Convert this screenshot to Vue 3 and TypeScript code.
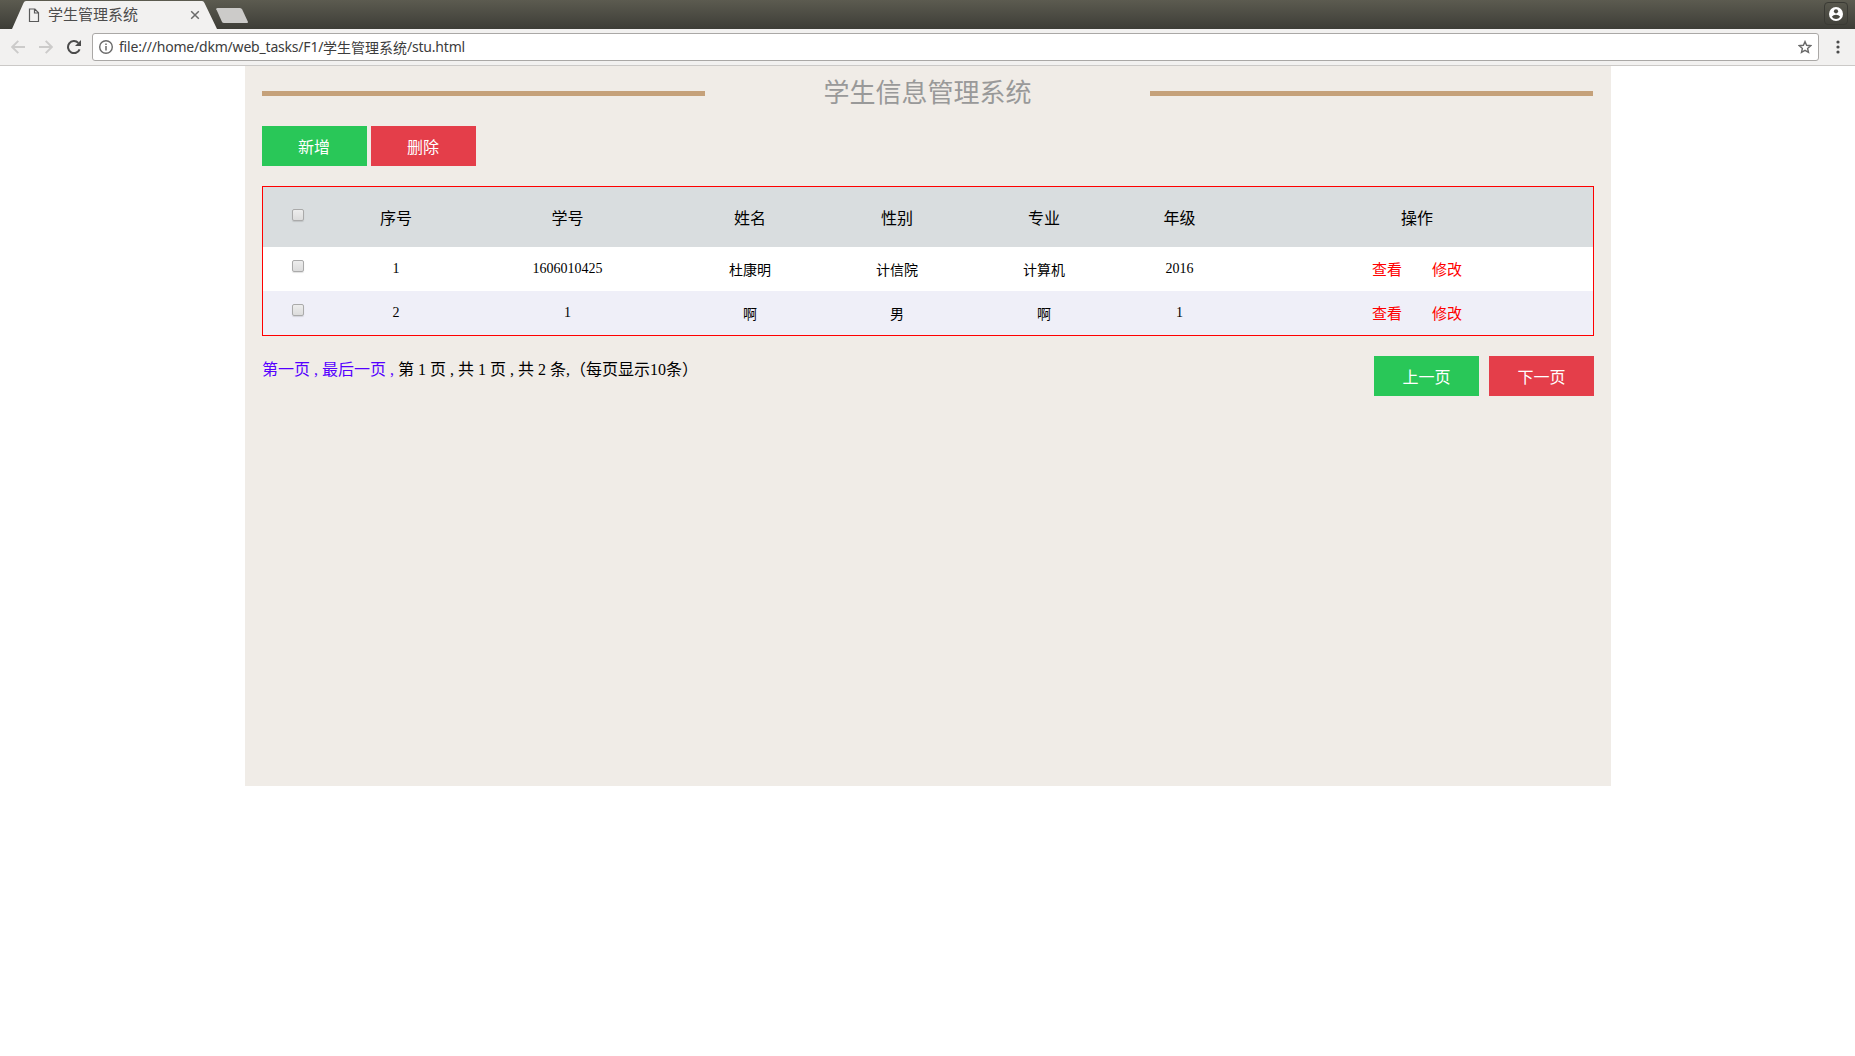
<script setup lang="ts">
interface Student {
  index: number
  id: string
  name: string
  gender: string
  major: string
  grade: string
}

const headers: string[] = ['序号', '学号', '姓名', '性别', '专业', '年级', '操作']

const students: Student[] = [
  { index: 1, id: '1606010425', name: '杜康明', gender: '计信院', major: '计算机', grade: '2016' },
  { index: 2, id: '1', name: '啊', gender: '男', major: '啊', grade: '1' },
]
</script>

<template>
  <div class="browser">
    <div class="tabstrip">
      <svg class="tabshape" width="260" height="29" viewBox="0 0 260 29">
        <path d="M12 29 L23.5 3 Q24.3 1 26 1 H202 Q203.700 1 204.500 3 L217 29 Z" fill="#f2f1f0" />
        <path d="M217.500 8 H240 Q241.500 8 242.200 9.500 L248 22 Q248 23 247 23 H224 Q222.500 23 221.800 21.500 L216.300 9.300 Q216 8 217.500 8 Z" fill="#cccbc9" />
      </svg>
      <div class="tab">
        <svg class="tab-icon" width="12" height="15" viewBox="0 0 12 15" fill="none" stroke="#5a5a5a" stroke-width="1.2">
          <path d="M1.500 1 H6.900 L10.500 4.800 V13.500 H1.500 Z M6.500 1 V5 H10.400" />
        </svg>
        <span class="tab-title">学生管理系统</span>
        <svg class="tab-close" width="10" height="10" viewBox="0 0 10 10" stroke="#6a6a6a" stroke-width="1.500">
          <path d="M1.200 1.200 L8.800 8.800 M8.800 1.200 L1.200 8.800" />
        </svg>
      </div>
      <div class="profile">
        <svg width="14" height="14" viewBox="0 0 14 14">
          <circle cx="7" cy="7" r="7" fill="#fff" />
          <circle cx="7" cy="4.300" r="2.100" fill="#4a4a42" />
          <path d="M2.800 9.700 Q4.200 7.800 7 7.800 Q9.800 7.800 11.200 9.700 Q9.600 12 7 12 Q4.400 12 2.800 9.700 Z" fill="#4a4a42" />
        </svg>
      </div>
    </div>

    <div class="toolbar">
      <svg class="nav" width="14" height="14" viewBox="0 0 14 14" fill="none" stroke="#cccbca" stroke-width="1.900">
        <path d="M14 7 H1.500 M7.300 .8 L1.200 7 L7.300 13.200" />
      </svg>
      <svg class="nav" width="14" height="14" viewBox="0 0 14 14" fill="none" stroke="#cccbca" stroke-width="1.900">
        <path d="M0 7 H12.500 M6.700 .8 L12.800 7 L6.700 13.200" />
      </svg>
      <svg class="nav reload" width="14" height="14" viewBox="0 0 14 14">
        <path d="M12.600 9.300 A6 6 0 1 1 11.300 2.900" fill="none" stroke="#4b4b4b" stroke-width="2" />
        <path d="M14 0 V6 H8 Z" fill="#4b4b4b" />
      </svg>
      <div class="omnibox">
        <svg width="14" height="14" viewBox="0 0 14 14">
          <circle cx="7" cy="7" r="6.300" fill="none" stroke="#6a6a6a" stroke-width="1.400" />
          <path d="M7 6 V10.500 M7 3.500 V5" stroke="#6a6a6a" stroke-width="1.500" />
        </svg>
        <span class="url"><span class="path">file:///home/dkm/web_tasks/F1/</span><span class="dir">学生管理系统</span><span class="file">/stu.html</span></span>
        <svg class="star" width="14" height="14" viewBox="0 0 14 14" fill="none" stroke="#6a6a6a" stroke-width="1.400">
          <path d="M7 1.600 L8.600 5.300 L12.700 5.700 L9.600 8.400 L10.500 12.400 L7 10.300 L3.500 12.400 L4.400 8.400 L1.300 5.700 L5.400 5.300 Z" />
        </svg>
      </div>
      <svg class="menu" width="4" height="14" viewBox="0 0 4 14" fill="#4b4b4b">
        <circle cx="2" cy="2" r="1.600" /><circle cx="2" cy="7" r="1.600" /><circle cx="2" cy="12" r="1.600" />
      </svg>
    </div>

    <main class="page">
      <header class="heading">
        <i class="rule"></i>
        <h1>学生信息管理系统</h1>
        <i class="rule"></i>
      </header>

      <div class="actions">
        <button class="btn add">新增</button>
        <button class="btn remove">删除</button>
      </div>

      <div class="table">
        <div class="row head">
          <div><span class="check"></span></div>
          <div v-for="h in headers" :key="h">{{ h }}</div>
        </div>
        <div v-for="s in students" :key="s.index" class="row">
          <div><span class="check"></span></div>
          <div class="num">{{ s.index }}</div>
          <div class="num">{{ s.id }}</div>
          <div>{{ s.name }}</div>
          <div>{{ s.gender }}</div>
          <div>{{ s.major }}</div>
          <div class="num">{{ s.grade }}</div>
          <div class="ops"><a>查看</a><a>修改</a></div>
        </div>
      </div>

      <footer class="pager">
        <p><a>第一页 , </a><a>最后一页 , </a>第 1 页 , 共 1 页 , 共 2 条,（每页显示10条）</p>
        <div class="pager-buttons">
          <button class="btn add">上一页</button>
          <button class="btn remove">下一页</button>
        </div>
      </footer>
    </main>
  </div>
</template>

<style>
body {
  background: #fff;
}
</style>

<style scoped>
.browser {
  font-family: "Liberation Serif", "Noto Sans CJK SC", serif;
  font-size: 16px;
  color: #000;
}
.tabstrip {
  position: relative;
  display: flex;
  justify-content: space-between;
  box-sizing: border-box;
  height: 29px;
  background: linear-gradient(#5c5b50, #3d3d37);
}
.tabshape {
  position: absolute;
  left: 0;
  top: 0;
}
.tab {
  position: relative;
  display: flex;
  align-items: center;
  width: 200px;
  height: 29px;
  padding-left: 28px;
  box-sizing: border-box;
}
.tab-icon {
  margin-top: 1px;
}
.tab-title {
  margin: 0 0 2px 8px;
  font: 15px/20px "Noto Sans CJK SC", sans-serif;
  color: #4c4c4c;
}
.tab-close {
  margin-left: auto;
}
.profile {
  display: flex;
  align-items: center;
  justify-content: center;
  box-sizing: border-box;
  width: 24px;
  height: 23px;
  margin: 2px 7px 0 0;
  border: 1px solid #3a3a34;
  border-radius: 4px;
}
.toolbar {
  display: flex;
  align-items: center;
  box-sizing: border-box;
  height: 37px;
  padding: 0 15px 0 11px;
  background: #f2f1f0;
  border-bottom: 1px solid #cbc9c7;
}
.nav {
  flex: none;
  margin-right: 14px;
}
.reload {
  margin-right: 11px;
}
.omnibox {
  display: flex;
  align-items: center;
  flex: 1;
  box-sizing: border-box;
  height: 28px;
  margin-right: 17px;
  padding: 0 6px;
  background: #fff;
  border: 1px solid #aaa8a6;
  border-radius: 3px;
}
.url {
  display: flex;
  margin-left: 6px;
  font: 14px/20px "Noto Sans", "Noto Sans CJK SC", sans-serif;
  color: #3c3c3c;
  white-space: nowrap;
}
.path {
  width: 204px;
  letter-spacing: -0.2px;
}
.dir {
  font-family: "Noto Sans CJK SC", sans-serif;
}
.file {
  letter-spacing: -0.2px;
}
.star {
  margin-left: auto;
}
.page {
  box-sizing: border-box;
  width: 1366px;
  height: 720px;
  margin-left: 245px;
  padding: 0 17px;
  background: #f0ece7;
}
.heading {
  display: flex;
  align-items: center;
  justify-content: space-between;
  height: 55px;
  padding-right: 1px;
}
.rule {
  width: 443px;
  height: 5px;
  background: #c5a17a;
}
h1 {
  margin: 0;
  font-size: 26px;
  font-weight: 400;
  line-height: 38px;
  color: #999;
}
.actions {
  display: flex;
  gap: 4px;
  margin-top: 5px;
}
.btn {
  box-sizing: border-box;
  width: 105px;
  height: 40px;
  padding: 3px 0 0;
  border: 0;
  font: inherit;
  line-height: 37px;
  color: #fff;
}
.actions .btn {
  padding-right: 1px;
}
.add {
  background: #29c758;
}
.remove {
  background: #e43e4a;
}
.table {
  margin-top: 20px;
  border: 1px solid #f00;
}
.row {
  display: grid;
  grid-template-columns: 70px 126px 217px 148px 146px 148px 123px 1fr;
  height: 44px;
  font-size: 14px;
  line-height: 47px;
  text-align: center;
  background: #fff;
}
.row:last-child {
  background: #efeff8;
}
.head {
  height: 60px;
  font-size: 16px;
  line-height: 63px;
  background: #d9dddf;
}
.num {
  line-height: 44px;
}
.row > div:first-child {
  display: flex;
  align-items: flex-start;
  justify-content: center;
  padding-top: 13px;
}
.head > div:first-child {
  padding-top: 22px;
}
.check {
  box-sizing: border-box;
  width: 12px;
  height: 12px;
  border: 1px solid #aaa;
  border-radius: 2px;
  background: linear-gradient(#ededed, #dcdcdc);
  box-shadow: 0 1px 1px rgba(0, 0, 0, 0.12);
}
.ops {
  display: flex;
  justify-content: center;
  gap: 30px;
  font-size: 15px;
  line-height: 46px;
  color: #f00;
}
.pager {
  display: flex;
  justify-content: space-between;
  margin-top: 20px;
}
.pager p {
  margin: 0;
  line-height: 27px;
  white-space: pre;
}
.pager a {
  color: #50f;
}
.pager-buttons {
  display: flex;
  gap: 10px;
}
</style>
